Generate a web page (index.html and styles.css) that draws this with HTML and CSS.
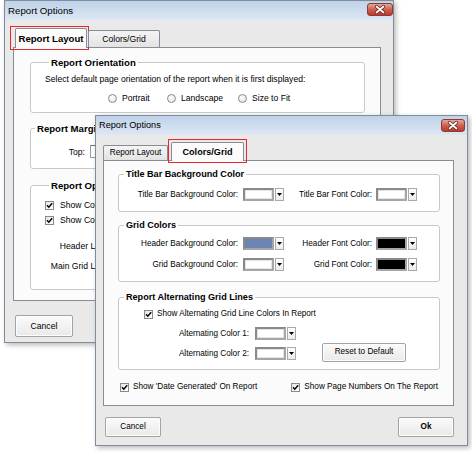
FILE: index.html
```html
<!DOCTYPE html>
<html>
<head>
<meta charset="utf-8">
<title>Report Options</title>
<link rel="stylesheet" href="styles.css">
</head>
<body>
<div class="win win-back">
  <div class="titlebar">
    <span class="title">Report Options</span>
    <span class="close"><svg viewBox="0 0 26 13" width="26" height="13"><path d="M9.5 3.5 L16.5 9.5 M16.5 3.5 L9.5 9.5" stroke="#5a1a14" stroke-width="3.2" stroke-linecap="round"/><path d="M9.5 3.5 L16.5 9.5 M16.5 3.5 L9.5 9.5" stroke="#fff" stroke-width="1.8" stroke-linecap="round"/></svg></span>
  </div>
  <div class="body">
    <div class="tabs">
      <div class="tab tab-sel tab-b1">Report Layout</div>
      <div class="tab tab-b2">Colors/Grid</div>
    </div>
    <div class="panel">
      <fieldset class="group g-orient">
        <legend>Report Orientation</legend>
        <div class="desc">Select default page orientation of the report when it is first displayed:</div>
        <div class="radios">
          <span class="opt opt-1"><span class="radio"></span>Portrait</span>
          <span class="opt opt-2"><span class="radio"></span>Landscape</span>
          <span class="opt"><span class="radio"></span>Size to Fit</span>
        </div>
      </fieldset>
      <fieldset class="group g-margins">
        <legend>Report Margins</legend>
        <div class="mrow"><span class="mlabel">Top:</span><span class="input"></span></div>
      </fieldset>
      <fieldset class="group g-opts">
        <legend>Report Options</legend>
        <div class="check-row"><span class="check"><svg viewBox="0 0 9 9" width="9" height="9"><path d="M2 4.3 L3.8 6.3 L7.2 2.2" fill="none" stroke="#000" stroke-width="1.4"/></svg></span>Show Column Headers</div>
        <div class="check-row"><span class="check"><svg viewBox="0 0 9 9" width="9" height="9"><path d="M2 4.3 L3.8 6.3 L7.2 2.2" fill="none" stroke="#000" stroke-width="1.4"/></svg></span>Show Column Lines</div>
        <div class="lgrid">
          <span class="lab">Header Line Color:</span>
          <span class="combo"><span class="swatch"></span><span class="arrow"><svg viewBox="0 0 9 13" width="9" height="13"><path d="M2 5 L7 5 L4.5 8 Z" fill="#000"/></svg></span></span>
          <span class="lab">Main Grid Line Color:</span>
          <span class="combo"><span class="swatch"></span><span class="arrow"><svg viewBox="0 0 9 13" width="9" height="13"><path d="M2 5 L7 5 L4.5 8 Z" fill="#000"/></svg></span></span>
        </div>
      </fieldset>
    </div>
    <div class="buttons"><span class="btn">Cancel</span><span class="btn btn-ok">Ok</span></div>
  </div>
</div>

<div class="win win-front">
  <div class="titlebar">
    <span class="title">Report Options</span>
    <span class="close"><svg viewBox="0 0 24 13" width="24" height="13"><path d="M8.5 3.5 L15.5 9.5 M15.5 3.5 L8.5 9.5" stroke="#5a1a14" stroke-width="3.2" stroke-linecap="round"/><path d="M8.5 3.5 L15.5 9.5 M15.5 3.5 L8.5 9.5" stroke="#fff" stroke-width="1.8" stroke-linecap="round"/></svg></span>
  </div>
  <div class="body">
    <div class="tabs">
      <div class="tab tab-f1">Report Layout</div>
      <div class="tab tab-sel tab-f2">Colors/Grid</div>
    </div>
    <div class="panel">
      <fieldset class="group g-title">
        <legend>Title Bar Background Color</legend>
        <div class="cgrid">
          <span class="lab">Title Bar Background Color:</span>
          <span class="combo"><span class="swatch"></span><span class="arrow"><svg viewBox="0 0 9 13" width="9" height="13"><path d="M2 5 L7 5 L4.5 8 Z" fill="#000"/></svg></span></span>
          <span class="lab">Title Bar Font Color:</span>
          <span class="combo"><span class="swatch"></span><span class="arrow"><svg viewBox="0 0 9 13" width="9" height="13"><path d="M2 5 L7 5 L4.5 8 Z" fill="#000"/></svg></span></span>
        </div>
      </fieldset>
      <fieldset class="group g-grid">
        <legend>Grid Colors</legend>
        <div class="cgrid">
          <span class="lab">Header Background Color:</span>
          <span class="combo"><span class="swatch sw-blue"></span><span class="arrow"><svg viewBox="0 0 9 13" width="9" height="13"><path d="M2 5 L7 5 L4.5 8 Z" fill="#000"/></svg></span></span>
          <span class="lab">Header Font Color:</span>
          <span class="combo"><span class="swatch sw-black"></span><span class="arrow"><svg viewBox="0 0 9 13" width="9" height="13"><path d="M2 5 L7 5 L4.5 8 Z" fill="#000"/></svg></span></span>
          <span class="lab">Grid Background Color:</span>
          <span class="combo"><span class="swatch"></span><span class="arrow"><svg viewBox="0 0 9 13" width="9" height="13"><path d="M2 5 L7 5 L4.5 8 Z" fill="#000"/></svg></span></span>
          <span class="lab">Grid Font Color:</span>
          <span class="combo"><span class="swatch sw-black"></span><span class="arrow"><svg viewBox="0 0 9 13" width="9" height="13"><path d="M2 5 L7 5 L4.5 8 Z" fill="#000"/></svg></span></span>
        </div>
      </fieldset>
      <fieldset class="group g-alt">
        <legend>Report Alternating Grid Lines</legend>
        <div class="check-row alt-check"><span class="check"><svg viewBox="0 0 9 9" width="9" height="9"><path d="M2 4.3 L3.8 6.3 L7.2 2.2" fill="none" stroke="#000" stroke-width="1.4"/></svg></span>Show Alternating Grid Line Colors In Report</div>
        <div class="agrid">
          <span class="lab">Alternating Color 1:</span>
          <span class="combo"><span class="swatch"></span><span class="arrow"><svg viewBox="0 0 9 13" width="9" height="13"><path d="M2 5 L7 5 L4.5 8 Z" fill="#000"/></svg></span></span>
          <span class="lab">Alternating Color 2:</span>
          <span class="combo"><span class="swatch"></span><span class="arrow"><svg viewBox="0 0 9 13" width="9" height="13"><path d="M2 5 L7 5 L4.5 8 Z" fill="#000"/></svg></span></span>
          <span class="btn btn-reset">Reset to Default</span>
        </div>
      </fieldset>
      <div class="bottom-checks">
        <div class="check-row"><span class="check"><svg viewBox="0 0 9 9" width="9" height="9"><path d="M2 4.3 L3.8 6.3 L7.2 2.2" fill="none" stroke="#000" stroke-width="1.4"/></svg></span>Show 'Date Generated' On Report</div>
        <div class="check-row"><span class="check"><svg viewBox="0 0 9 9" width="9" height="9"><path d="M2 4.3 L3.8 6.3 L7.2 2.2" fill="none" stroke="#000" stroke-width="1.4"/></svg></span>Show Page Numbers On The Report</div>
      </div>
    </div>
    <div class="buttons"><span class="btn">Cancel</span><span class="btn btn-ok">Ok</span></div>
  </div>
</div>

<div class="mark mark-back"></div>
<div class="mark mark-front"></div>
</body>
</html>
```

FILE: styles.css
```css
* { box-sizing: border-box; }
html, body { margin: 0; padding: 0; }
body {
  width: 472px;
  height: 452px;
  background: #fff;
  font-family: "Liberation Sans", Arial, sans-serif;
  color: #000;
  position: relative;
  overflow: hidden;
}

/* windows on the desktop */
.win {
  position: absolute;
  background: #e9e9e9;
  border: 1px solid #7f8c9c;
  box-shadow: 2px 2px 5px rgba(0, 0, 0, 0.28);
  display: flex;
  flex-direction: column;
  line-height: 12px;
}
.win-back { left: 4px; top: 0; width: 390px; height: 343px; font-size: 8.6px; }
.win-front { left: 95px; top: 115px; width: 373px; height: 331px; font-size: 8.2px; }

.titlebar {
  flex: none;
  height: 19px;
  display: flex;
  justify-content: space-between;
  align-items: flex-start;
  background: linear-gradient(#bfd2e9, #dde7f2);
}
.title { line-height: 19px; padding-left: 3px; color: #000; }
.win-back .title { font-size: 9.7px; }
.win-front .title { font-size: 9.2px; }
.close {
  display: block;
  height: 13px;
  border: 1px solid #8a3b33;
  border-radius: 3px;
  background: linear-gradient(#e6a89b, #cf6050 50%, #c0392b);
  overflow: hidden;
}
.close svg { display: block; margin: -1px; }
.win-back .close { width: 26px; margin-top: 2px; margin-right: 0; }
.win-front .close { width: 24px; margin-top: 3px; margin-right: 2px; }

.body { flex: 1; display: flex; flex-direction: column; }
.win-back .body { padding: 8px 12px 0 8px; }
.win-front .body { padding: 7px 13px 0 7px; }

/* tabs */
.tabs { display: flex; align-items: flex-end; position: relative; z-index: 1; }
.win-back .tabs { height: 19px; }
.win-front .tabs { height: 18px; }
.tab {
  border: 1px solid #898c95;
  border-bottom: none;
  border-radius: 2px 2px 0 0;
  background: linear-gradient(#f4f4f4, #e3e3e3);
  text-align: center;
}
.tab-sel {
  background: #fbfbfb;
  font-weight: bold;
  margin-bottom: -1px;
}
.tab-b1 { width: 72px; height: 20px; margin-left: 2px; line-height: 19px; font-size: 9.6px; }
.tab-b2 { width: 72px; height: 17px; margin-left: 1px; line-height: 16px; }
.tab-f1 { width: 65px; height: 15px; line-height: 14px; }
.tab-f2 { width: 73px; height: 19px; margin-left: 3px; line-height: 18px; font-size: 9.1px; }

.panel {
  border: 1px solid #898c95;
  background: #fbfbfb;
  display: flex;
  flex-direction: column;
}
.win-back .panel { padding: 8px 15px 10px 16px; }
.win-front .panel { padding: 7px 13px 12px 14px; }

/* group boxes */
.group {
  margin: 0;
  min-width: 0;
  border: 1px solid #c9c9c9;
  border-radius: 3px;
  background: #fff;
}
.group legend { padding: 0 2px; font-weight: bold; }
.win-back .group legend { font-size: 9.6px; line-height: 13px; margin-left: 4px; }
.win-front .group legend { font-size: 9.1px; line-height: 12px; margin-left: 5px; }

/* back window groups */
.g-orient { padding: 4px 0 8px 14px; }
.desc { line-height: 12px; }
.radios { display: flex; margin-top: 7px; padding-left: 63px; height: 12px; align-items: center; }
.opt { display: flex; align-items: center; }
.opt-1 { width: 59px; }
.opt-2 { width: 71px; }
.radio {
  width: 9px; height: 9px;
  border: 1px solid #8a8a8a;
  border-radius: 50%;
  background: radial-gradient(circle at 40% 35%, #fff, #dedede);
  margin-right: 5px;
}
.g-margins { margin-top: 9px; padding: 10px 0 10px 0; }
.mrow { display: flex; align-items: center; height: 13px; }
.mlabel { width: 54px; text-align: right; margin-right: 5px; }
.input {
  width: 60px; height: 13px;
  border: 1px solid #9a9a9a;
  border-top-color: #6f6f6f;
  background: #fff;
}
.g-opts { margin-top: 10px; padding: 7px 0 16px 14px; }
.check-row { display: flex; align-items: center; height: 12px; white-space: nowrap; }
.check {
  flex: none;
  width: 9px; height: 9px;
  border: 1px solid #8a8a8a;
  background: linear-gradient(135deg, #e8e8e8, #fff);
  margin-right: 4px;
}
.check svg { display: block; margin: -1px; }
.g-opts .check { margin-right: 6px; }
.g-opts .check-row + .check-row { margin-top: 3px; }
.lgrid {
  display: grid;
  grid-template-columns: 101px 42px;
  column-gap: 4px;
  row-gap: 7px;
  margin-top: 14px;
  margin-left: -14px;
  align-items: center;
}

/* combo (colour picker) */
.lab { text-align: right; line-height: 13px; white-space: nowrap; }
.combo { display: flex; height: 13px; width: 41px; }
.swatch {
  width: 31px; height: 13px;
  border: 2px solid #a6a6a6;
  border-top-color: #8a8a8a;
  border-left-color: #8a8a8a;
  background: #fff;
  box-shadow: inset 0 0 0 1px #e4e4e4;
}
.sw-blue { background: #6b84b1; box-shadow: none; }
.sw-black { background: #000; box-shadow: none; }
.arrow {
  width: 9px; height: 13px;
  margin-left: 1px;
  border: 1px solid #a9a9a9;
  background: linear-gradient(#ffffff, #ececec);
}
.arrow svg { display: block; margin: -1px; }

/* front window groups */
.g-title { padding: 8px 0 10px 0; }
.cgrid {
  display: grid;
  grid-template-columns: 124px 41px 92px 41px;
  row-gap: 8px;
  align-items: center;
}
.cgrid .lab:nth-child(1), .cgrid .lab:nth-child(5) { padding-right: 5px; }
.cgrid .lab:nth-child(3), .cgrid .lab:nth-child(7) { padding-right: 4px; }
.g-grid { margin-top: 7px; padding: 6px 0 10px 0; }
.g-alt { margin-top: 9px; padding: 5px 0 9px 0; }
.alt-check { padding-left: 25px; }
.agrid {
  display: grid;
  grid-template-columns: 136px 41px 26px 84px;
  grid-template-rows: 13px 13px;
  row-gap: 7px;
  margin-top: 7px;
  align-items: center;
}
.agrid .lab { padding-right: 6px; }
.agrid .lab:nth-child(3) { grid-row: 2; grid-column: 1; }
.agrid .combo:nth-child(4) { grid-row: 2; grid-column: 2; }
.btn-reset { grid-row: 2; grid-column: 4; height: 19px; margin-top: -3px; }

.bottom-checks {
  display: flex;
  justify-content: space-between;
  margin-top: 11px;
  padding: 0 2px;
}

/* buttons */
.buttons { display: flex; justify-content: space-between; }
.win-back .buttons { margin-top: 14px; padding-left: 2px; }
.win-front .buttons { margin-top: 11px; padding-left: 2px; }
.btn {
  display: flex;
  align-items: center;
  justify-content: center;
  border: 1px solid #a3a3a3;
  border-radius: 2px;
  background: linear-gradient(#fbfbfb, #e9e9e9);
  box-shadow: inset 0 0 0 1px #fdfdfd;
}
.win-back .btn { width: 58px; height: 22px; }
.win-front .btn { width: 56px; height: 20px; }
.win-front .btn-reset { width: 84px; height: 19px; }
.btn-ok { font-weight: bold; }

/* red annotation boxes drawn over the screenshot */
.mark {
  position: absolute;
  width: 79px;
  height: 24px;
  border: 1px solid #e8262d;
}
.mark-back { left: 10px; top: 26px; }
.mark-front { left: 168px; top: 139px; }
```
